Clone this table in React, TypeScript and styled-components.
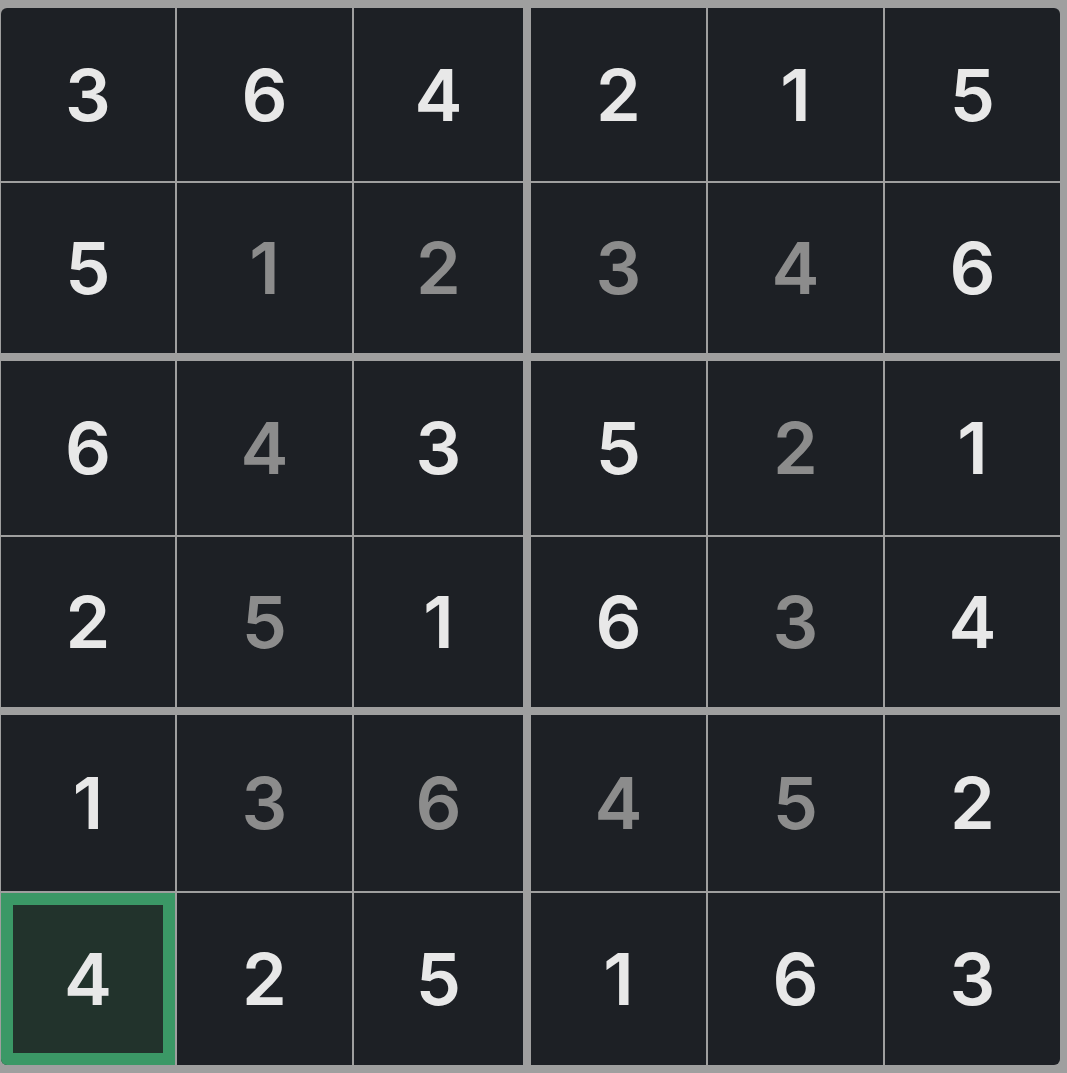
import React from "react";
import styled, { createGlobalStyle } from "styled-components";

const GlobalStyle = createGlobalStyle`
  html, body {
    margin: 0;
    padding: 0;
    background: #9f9f9f;
  }
  body {
    font-family: Inter, "Noto Sans", sans-serif;
  }
`;

const Page = styled.div`
  padding: 8px 7px 8px 1px;
`;

const Board = styled.div`
  display: grid;
  grid-template-columns: 522fr 529fr;
  grid-template-rows: 345fr 346fr 350fr;
  gap: 8px;
  height: 1057px;
  border-radius: 6px;
  overflow: hidden;
  background: #9f9f9f;
`;

const Box = styled.div<{ $left: boolean }>`
  display: grid;
  grid-template-columns: ${(p) => (p.$left ? "174fr 175fr 169fr" : "1fr 1fr 1fr")};
  grid-template-rows: 174fr 170fr;
  gap: 2px;
`;

const Cell = styled.div<{ $given: boolean; $selected: boolean }>`
  display: flex;
  align-items: center;
  justify-content: center;
  box-sizing: border-box;
  background: ${(p) => (p.$selected ? "#22332c" : "#1d2025")};
  border: ${(p) => (p.$selected ? "12px solid #3b9866" : "none")};
  color: ${(p) => (p.$given ? "#e8e8e8" : "#8c8c8c")};
  font-family: Inter, "Noto Sans", sans-serif;
  font-weight: 600;
  font-size: 72px;
  line-height: 1;
  user-select: none;
`;

const values = [
  [3, 6, 4, 2, 1, 5],
  [5, 1, 2, 3, 4, 6],
  [6, 4, 3, 5, 2, 1],
  [2, 5, 1, 6, 3, 4],
  [1, 3, 6, 4, 5, 2],
  [4, 2, 5, 1, 6, 3],
];

// 1 = bright (given), 0 = dim (entered)
const given = [
  [1, 1, 1, 1, 1, 1],
  [1, 0, 0, 0, 0, 1],
  [1, 0, 1, 1, 0, 1],
  [1, 0, 1, 1, 0, 1],
  [1, 0, 0, 0, 0, 1],
  [1, 1, 1, 1, 1, 1],
];

const selected = { r: 5, c: 0 };

export default function App() {
  const boxes: { br: number; bc: number }[] = [];
  for (let br = 0; br < 3; br++) {
    for (let bc = 0; bc < 2; bc++) boxes.push({ br, bc });
  }
  return (
    <Page>
      <GlobalStyle />
      <Board>
        {boxes.map(({ br, bc }) => (
          <Box key={`${br}-${bc}`} $left={bc === 0}>
            {[0, 1].flatMap((ri) =>
              [0, 1, 2].map((ci) => {
                const r = br * 2 + ri;
                const c = bc * 3 + ci;
                return (
                  <Cell
                    key={`${r}-${c}`}
                    $given={given[r][c] === 1}
                    $selected={r === selected.r && c === selected.c}
                  >
                    {values[r][c]}
                  </Cell>
                );
              })
            )}
          </Box>
        ))}
      </Board>
    </Page>
  );
}
